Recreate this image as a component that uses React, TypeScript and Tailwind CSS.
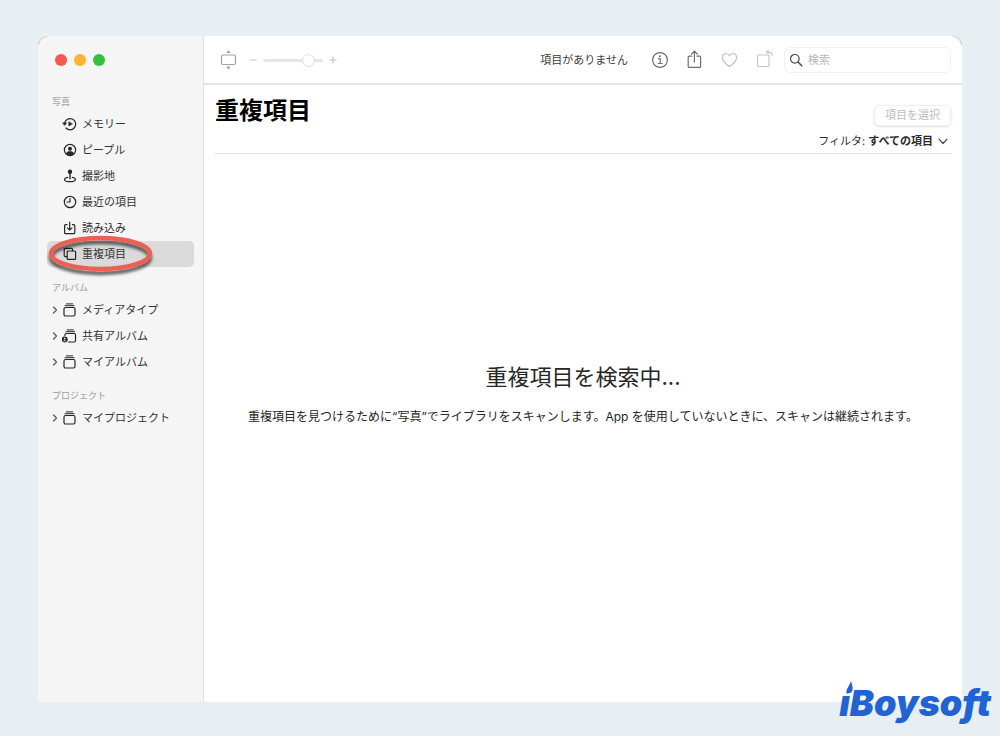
import type { ReactNode } from "react";

const stroke = {
  fill: "none",
  stroke: "currentColor",
  strokeWidth: 1.2,
  strokeLinecap: "round" as const,
  strokeLinejoin: "round" as const,
};

function Icon({ children }: { children: ReactNode }) {
  return (
    <svg viewBox="0 0 16 16" className="size-4 shrink-0 text-[#262626]" aria-hidden="true" {...stroke}>
      {children}
    </svg>
  );
}

const MemoriesIcon = () => (
  <Icon>
    <path d="M2.600 7.200A5.600 5.600 0 1 1 4 12" />
    <path d="M.600 6.800h4.200L2.700 9.600z" fill="currentColor" strokeWidth="0.400" />
    <path d="M6.800 6v4L10.200 8z" fill="currentColor" strokeWidth="0.600" />
  </Icon>
);

const PeopleIcon = () => (
  <Icon>
    <circle cx="8" cy="8" r="5.600" />
    <circle cx="8" cy="6.700" r="2" fill="currentColor" stroke="none" />
    <path d="M4 11.600c.600-1.800 2-2.400 4-2.400s3.400.600 4 2.400A5.600 5.600 0 0 1 4 11.600z" fill="currentColor" stroke="none" />
  </Icon>
);

const PlacesIcon = () => (
  <Icon>
    <circle cx="8" cy="3.800" r="2.200" fill="currentColor" stroke="none" />
    <path d="M8 5v5.800" strokeWidth="1.400" />
    <path d="M5.800 9.400C3.900 9.700 2.600 10.500 2.600 11.400c0 1.200 2.400 2.200 5.400 2.200s5.400-1 5.400-2.200c0-.900-1.300-1.700-3.200-2" />
  </Icon>
);

const RecentIcon = () => (
  <Icon>
    <circle cx="8" cy="8" r="5.700" />
    <path d="M8 4.600V8H5" />
  </Icon>
);

const ImportIcon = () => (
  <Icon>
    <path d="M5 4.700H3.600q-1 0-1 1v7q0 1 1 1h8.200q1 0 1-1v-7q0-1-1-1h-1.400" />
    <path d="M7.700 2.200v7.800M5.400 7.800l2.300 2.300 2.300-2.300" />
  </Icon>
);

const DuplicatesIcon = () => (
  <Icon>
    <rect x="5.200" y="5" width="8.400" height="8.400" rx="1" />
    <path d="M5 10.600H3.200a1 1 0 0 1-1-1V3.400a1 1 0 0 1 1-1h6.400a1 1 0 0 1 1 1v1.400" />
  </Icon>
);

const AlbumIcon = () => (
  <Icon>
    <rect x="2" y="5.500" width="11" height="8.500" rx="1.500" />
    <path d="M3 3.700h9M4.300 1.900h6.400" strokeWidth="1" />
  </Icon>
);

const SharedAlbumIcon = () => (
  <Icon>
    <path d="M3 7.500V6.700Q3 5.500 4.200 5.500h8.100q1.200 0 1.200 1.200v6.100q0 1.200-1.200 1.200H6.500" />
    <path d="M4 3.700h8.600M5.200 1.900h6.200" strokeWidth="1" />
    <circle cx="2.700" cy="11.400" r="3" fill="currentColor" stroke="none" />
    <circle cx="2.700" cy="10.600" r=".900" fill="#f5f5f5" stroke="none" />
    <path d="M1 13.200q1.700-1.800 3.400 0z" fill="#f5f5f5" stroke="none" />
  </Icon>
);

type Item = { label: string; icon: () => ReactNode; current?: boolean };
type Section = { title: string; expandable?: boolean; items: Item[] };

const sections: Section[] = [
  {
    title: "写真",
    items: [
      { label: "メモリー", icon: MemoriesIcon },
      { label: "ピープル", icon: PeopleIcon },
      { label: "撮影地", icon: PlacesIcon },
      { label: "最近の項目", icon: RecentIcon },
      { label: "読み込み", icon: ImportIcon },
      { label: "重複項目", icon: DuplicatesIcon, current: true },
    ],
  },
  {
    title: "アルバム",
    expandable: true,
    items: [
      { label: "メディアタイプ", icon: AlbumIcon },
      { label: "共有アルバム", icon: SharedAlbumIcon },
      { label: "マイアルバム", icon: AlbumIcon },
    ],
  },
  {
    title: "プロジェクト",
    expandable: true,
    items: [{ label: "マイプロジェクト", icon: AlbumIcon }],
  },
];

function Highlight() {
  return (
    <svg
      viewBox="0 0 116 50"
      className="pointer-events-none absolute -top-2 -left-1 z-10 h-[50px] w-[116px]"
      aria-hidden="true"
    >
      <defs>
        <filter id="ring-shadow" x="-20%" y="-40%" width="140%" height="190%">
          <feDropShadow dx="0" dy="4" stdDeviation="1.800" floodColor="#000" floodOpacity="0.600" />
        </filter>
      </defs>
      <ellipse cx="57.500" cy="20.500" rx="49.500" ry="15.500" fill="none" stroke="#ec6152" strokeWidth="4.500" filter="url(#ring-shadow)" />
    </svg>
  );
}

function Sidebar() {
  return (
    <aside className="w-[166px] shrink-0 border-r border-[#e0e0e0] bg-[#f5f5f5] pt-[18px] pr-[9px] pl-[9px]">
      <div className="flex gap-[7px] pl-2">
        <button aria-label="閉じる" className="size-3 rounded-full bg-[#f9564f]" />
        <button aria-label="しまう" className="size-3 rounded-full bg-[#fbb42c]" />
        <button aria-label="拡大" className="size-3 rounded-full bg-[#33c23c]" />
      </div>
      <nav className="mt-[27px] flex flex-col gap-3">
        {sections.map((section) => (
          <section key={section.title}>
            <h2 className="pl-[5px] text-[9px] leading-[18px] font-medium text-[#adadad]">{section.title}</h2>
            <ul>
              {section.items.map(({ label, icon: ItemIcon, current }) => (
                <li key={label} className="relative">
                  <a
                    href="#"
                    aria-current={current ? "page" : undefined}
                    className={`flex h-[26px] items-center rounded-[5px] pl-[5px] ${current ? "bg-[#dadada]" : ""}`}
                  >
                    <span className="flex w-[10px] shrink-0 items-center">
                      {section.expandable && (
                        <svg viewBox="0 0 6 8" className="h-2 w-[6px] text-[#555]" aria-hidden="true" {...stroke}>
                          <path d="M1.500 1l3 3-3 3" />
                        </svg>
                      )}
                    </span>
                    <ItemIcon />
                    <span className="pl-1 text-[11px] whitespace-nowrap">{label}</span>
                  </a>
                  {current && <Highlight />}
                </li>
              ))}
            </ul>
          </section>
        ))}
      </nav>
    </aside>
  );
}

function Toolbar() {
  return (
    <header className="flex h-[49px] items-center border-b-2 border-[#e3e3e3] pt-px pr-[11px] pl-4">
      <button aria-label="縦横比" className="text-[#a3a3a3]">
        <svg viewBox="0 0 18 20" className="h-5 w-[18px]" aria-hidden="true" {...stroke}>
          <rect x="1.500" y="5" width="14" height="9.500" rx="1.200" />
          <path d="M7.300 2.500L8.500 1l1.200 1.500zM7.300 17.200l1.200 1.500 1.200-1.500z" fill="currentColor" />
        </svg>
      </button>
      <div className="ml-[10px] flex items-center gap-1 text-[#c4c4c4]">
        <svg viewBox="0 0 10 10" className="size-[10px]" aria-hidden="true" {...stroke}>
          <path d="M2 5h6" />
        </svg>
        <input
          type="range"
          aria-label="ズーム"
          min={0}
          max={100}
          defaultValue={83}
          className="mx-px h-[14px] w-[60px] appearance-none bg-transparent [&::-webkit-slider-runnable-track]:h-[3px] [&::-webkit-slider-runnable-track]:rounded-full [&::-webkit-slider-runnable-track]:bg-[#e6e6e6] [&::-webkit-slider-thumb]:-mt-[5px] [&::-webkit-slider-thumb]:size-[13px] [&::-webkit-slider-thumb]:appearance-none [&::-webkit-slider-thumb]:rounded-full [&::-webkit-slider-thumb]:border [&::-webkit-slider-thumb]:border-[#dedede] [&::-webkit-slider-thumb]:bg-white"
        />
        <svg viewBox="0 0 10 10" className="size-[10px]" aria-hidden="true" {...stroke}>
          <path d="M2 5h6M5 2v6" />
        </svg>
      </div>
      <p className="ml-auto text-[11px] text-[#3a3a3a]">項目がありません</p>
      <div className="ml-[22px] flex items-center gap-[15px] text-[#6f6f6f]">
        <button aria-label="情報">
          <svg viewBox="0 0 20 20" className="size-5" aria-hidden="true" {...stroke}>
            <circle cx="10" cy="10" r="7.400" />
            <path d="M8.500 8.700h1.700v4.800M8.200 13.500h4" />
            <circle cx="9.900" cy="6.200" r="1" fill="currentColor" stroke="none" />
          </svg>
        </button>
        <button aria-label="共有">
          <svg viewBox="0 0 20 20" className="size-5" aria-hidden="true" {...stroke}>
            <path d="M6.800 6.200H4.200a1 1 0 0 0-1 1v9.200a1 1 0 0 0 1 1h10.400a1 1 0 0 0 1-1V7.200a1 1 0 0 0-1-1H12" />
            <path d="M9.400 12V1.400M6.600 4l2.800-2.800L12.200 4" />
          </svg>
        </button>
        <button aria-label="お気に入り" disabled className="text-[#c6c6c6]">
          <svg viewBox="0 0 20 20" className="size-5" aria-hidden="true" {...stroke} strokeWidth="1.400">
            <path d="M9.500 16.600C5.200 13.600 2.400 10.900 2.400 7.600c0-2.300 1.600-4 3.700-4 1.500 0 2.700.800 3.400 2.200.700-1.400 1.900-2.200 3.400-2.200 2.100 0 3.700 1.700 3.700 4 0 3.300-2.800 6-7.100 9z" />
          </svg>
        </button>
        <button aria-label="回転" disabled className="text-[#c6c6c6]">
          <svg viewBox="0 0 20 20" className="size-5" aria-hidden="true" {...stroke}>
            <rect x="2.500" y="5" width="11.500" height="11.500" rx="1.200" />
            <path d="M12.500 2.200h2q2.600 0 2.600 3" />
            <path d="M13.400.400v3.600L11 2.200z" fill="currentColor" strokeWidth="0.500" />
          </svg>
        </button>
      </div>
      <label className="ml-[9px] flex h-[26px] w-[167px] items-center gap-[5px] rounded-md border border-[#f1f1f1] pl-1">
        <svg viewBox="0 0 14 14" className="size-[14px] shrink-0 text-[#4a4a4a]" aria-hidden="true" {...stroke}>
          <circle cx="5.800" cy="5.800" r="4.300" />
          <path d="M9 9l3.800 3.800" strokeWidth="1.500" />
        </svg>
        <input
          type="search"
          aria-label="検索"
          placeholder="検索"
          className="w-full min-w-0 bg-transparent pt-px text-[11px] outline-none placeholder:text-[#b8b8b8]"
        />
      </label>
    </header>
  );
}

function Logo() {
  return (
    <div
      className="absolute right-[9px] bottom-[11px] font-['Inter',sans-serif] text-[36px] leading-[44px] font-black text-[#2263d3] italic"
    >
      <svg viewBox="0 0 10 14" className="absolute top-0 left-[5px] h-[14px] w-[10px]" aria-hidden="true">
        <path d="M7 0c.600 3 2 5 1.600 8.500C8.200 11.500 6.500 12.500 2.500 12.500 1.500 8.500 5.500 5 7 0z" fill="#2263d3" />
      </svg>
      <span>ıBoysoft</span>
    </div>
  );
}

export default function App() {
  return (
    <div className="relative flex min-h-screen flex-col bg-[#e7eff3] px-[38px] pt-9 pb-[34px] font-['Inter','Noto_Sans_CJK_JP',sans-serif] text-[#333]">
      <div className="relative flex flex-1 overflow-hidden rounded-t-[9px] rounded-b-[3px] bg-white">
        <span className="absolute top-0 left-0 size-[9px] rounded-tl-[9px] border-t border-l border-[#b5babd]" />
        <span className="absolute top-0 right-0 size-[9px] rounded-tr-[9px] border-t border-r border-[#b5babd]" />
        <Sidebar />
        <div className="flex min-w-0 flex-1 flex-col">
          <Toolbar />
          <main className="flex flex-1 flex-col pr-[11px] pl-[11px]">
            <div className="flex items-start justify-between border-b border-[#e2e2e2] pb-[3px]">
              <h1 className="pt-[10px] text-[24px] leading-8 font-bold text-black">重複項目</h1>
              <div className="flex flex-col items-end pt-5">
                <button
                  disabled
                  className="h-[21px] rounded-[5px] border border-[#f0f0f0] px-[10px] text-[11px] leading-[19px] text-[#bdbdbd] shadow-sm"
                >
                  項目を選択
                </button>
                <div className="mt-[6px] flex h-[18px] items-center text-[11px] text-[#2b2b2b]">
                  <label htmlFor="filter">フィルタ:</label>
                  <div className="relative ml-[3px] flex items-center">
                    <select id="filter" className="field-sizing-content appearance-none bg-transparent pr-[18px] font-bold">
                      <option>すべての項目</option>
                    </select>
                    <svg
                      viewBox="0 0 10 7"
                      className="pointer-events-none absolute right-[3px] h-[7px] w-[10px] text-[#444]"
                      aria-hidden="true"
                      {...stroke}
                    >
                      <path d="M1 1.200l4 4.300 4-4.300" />
                    </svg>
                  </div>
                </div>
              </div>
            </div>
            <div className="flex flex-1 flex-col items-center justify-center pb-[68px] text-center text-[#262626]">
              <h2 className="text-[22px] leading-8">重複項目を検索中...</h2>
              <p className="mt-[14px] text-[12px] leading-5">
                重複項目を見つけるために“写真”でライブラリをスキャンします。App を使用していないときに、スキャンは継続されます。
              </p>
            </div>
          </main>
        </div>
      </div>
      <Logo />
    </div>
  );
}
